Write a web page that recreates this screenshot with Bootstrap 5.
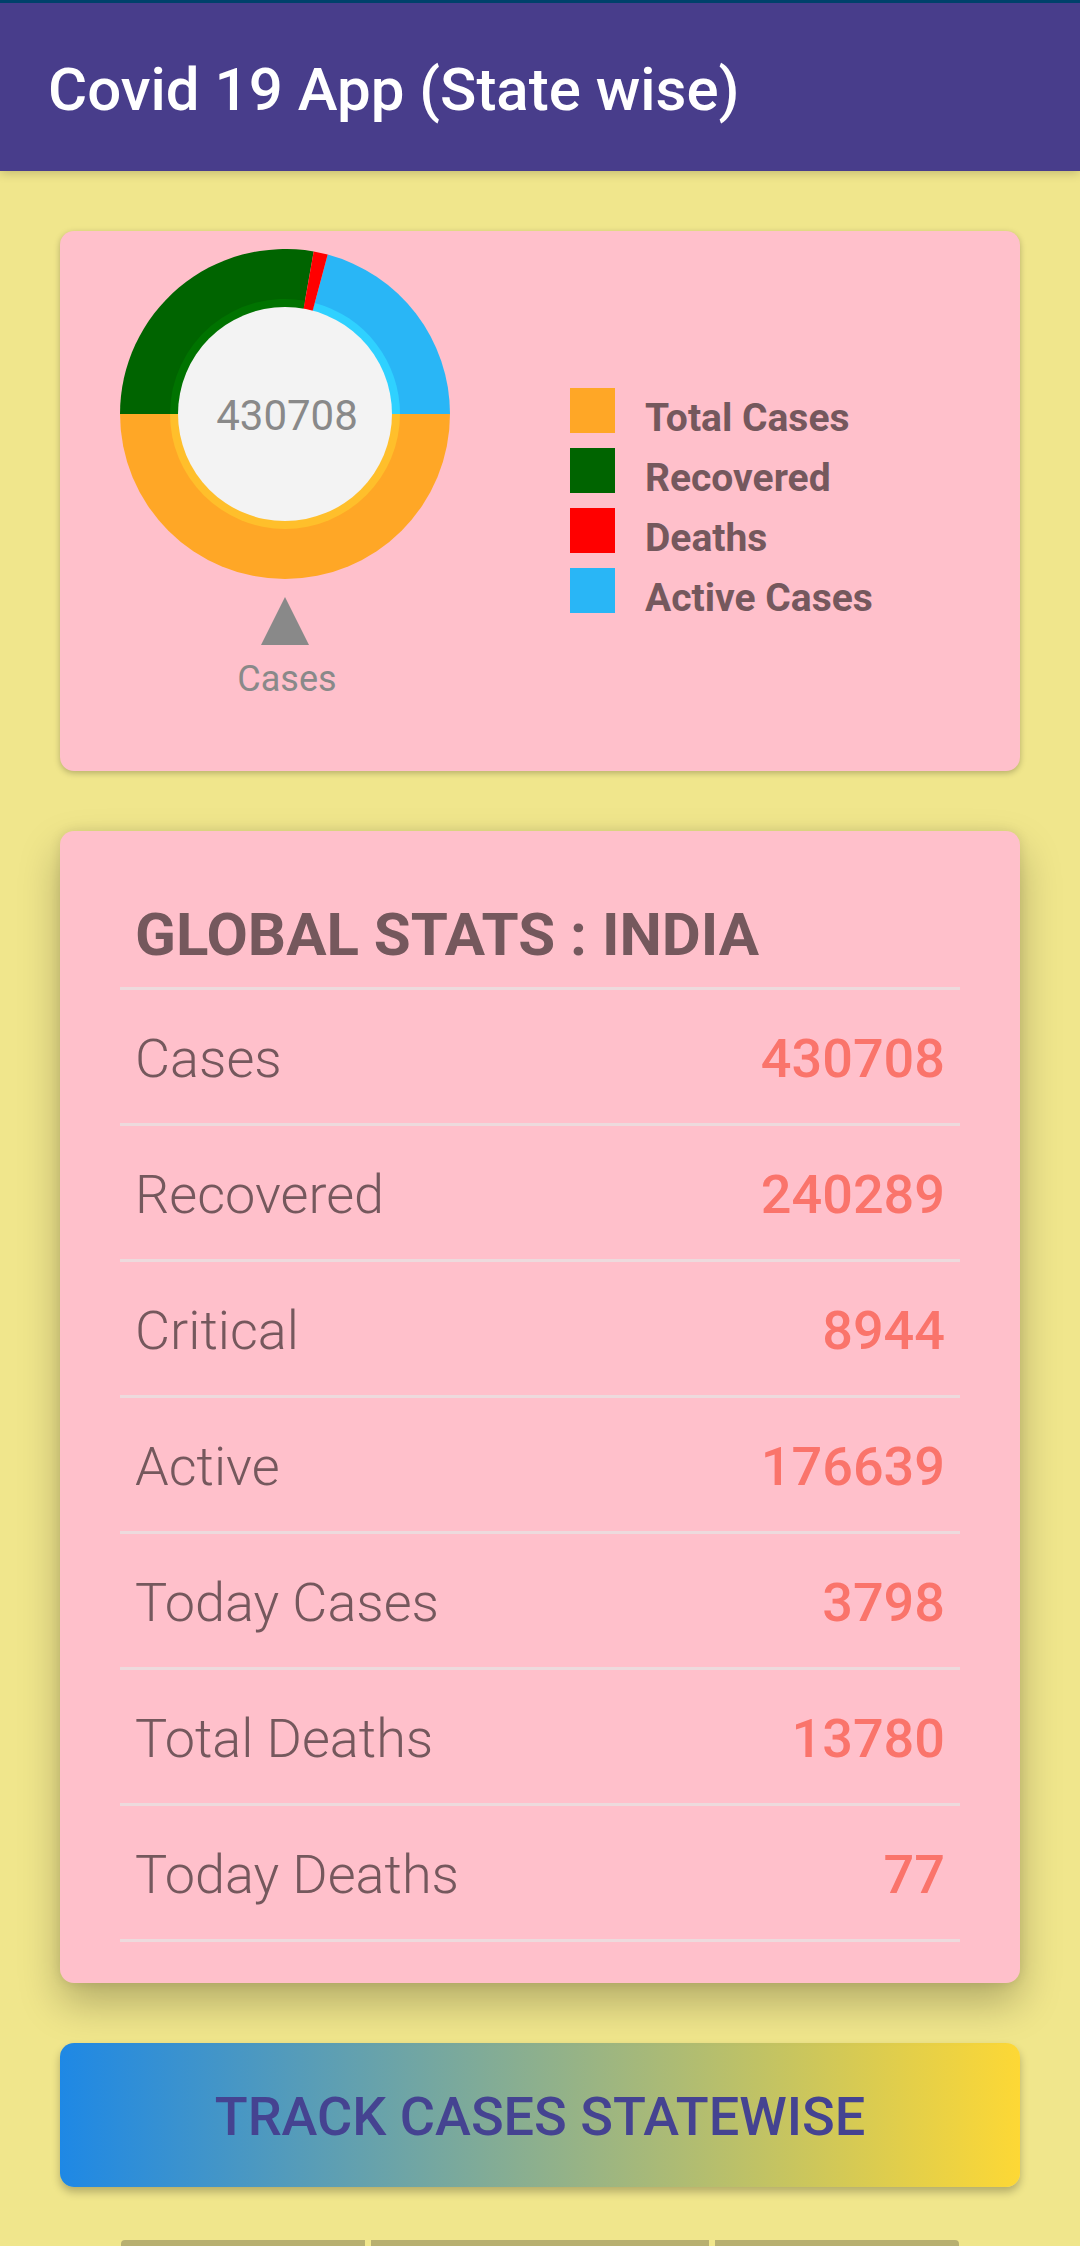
<!DOCTYPE html>
<html lang="en">
<head>
<meta charset="utf-8">
<meta name="viewport" content="width=device-width, initial-scale=1">
<title>Covid 19 App (State wise)</title>
<link rel="stylesheet" href="https://cdn.jsdelivr.net/npm/bootstrap@5.3.0/dist/css/bootstrap.min.css">
<style>
body{font-family:Roboto,"Liberation Sans",sans-serif;background:#f0e68c;color:#75585d}
.app-bar{background:#483d8b;border-top:3px solid #00416b;padding:5px 48px 0;height:171px;box-shadow:0 2px 10px rgba(0,0,0,.2)}
.app-title{font-size:60px;line-height:70px;font-weight:500;color:#fff}
.page-body{padding:60px 60px 0;gap:60px}
.panel{background:#ffc0cb;border:0;border-radius:14px}
.chart-panel{padding:18px 60px 65px;box-shadow:0 2px 6px rgba(0,0,0,.25)}
.chart-svg{width:330px;height:457px;flex:none}
.chart-svg text{fill:#898989;text-anchor:middle}
.chart-legend{padding:139px 0 0 120px}
.legend-row{height:60px;font-size:39px;line-height:46px;font-weight:700;gap:30px}
.legend-row span:last-child{padding-top:7px}
.swatch{width:45px;height:45px}
.stats-panel{padding:69px 60px 41px;box-shadow:0 20px 40px rgba(0,0,0,.25),0 0 12px rgba(0,0,0,.1)}
.stats-title{font-size:60px;line-height:70px;font-weight:700;padding:0 15px 17px;margin:0}
.stats-table{border-top:3px solid #eddadd;font-size:54px;line-height:63px;margin:0;--bs-table-bg:transparent;--bs-table-color:#75585d}
.stats-table th,.stats-table td{padding:37px 15px 33px;border-bottom:3px solid #eddadd}
.stats-table th{font-weight:300}
.stats-table td{font-weight:500;color:#fa746b}
.track-btn{height:144px;border:0;border-radius:14px;padding:8px 12px 6px;background:linear-gradient(90deg,#1e88e5,#fdd835);color:#454391;font-size:54px;line-height:63px;font-weight:500;box-shadow:0 5px 9px rgba(0,0,0,.25)}
.track-btn:hover{color:#454391}
.state-head{padding:0 61px;margin-top:-7px;gap:6px}
.state-head div{height:6px;background:#b8b070;flex:244 1 0}
.state-head div:first-child{border-top-left-radius:4px}
.state-head div:nth-child(2){flex-grow:338}
.state-head div:last-child{border-top-right-radius:4px}
</style>
<script src="https://cdn.jsdelivr.net/npm/bootstrap@5.3.0/dist/js/bootstrap.bundle.min.js"></script>
</head>
<body>
<header class="app-bar navbar">
  <h1 class="app-title m-0">Covid 19 App (State wise)</h1>
</header>
<main class="page-body d-flex flex-column">
  <section class="panel chart-panel card flex-row">
    <svg class="chart-svg" viewBox="0 0 330 457" role="img" aria-label="Cases chart">
      <path fill="#ffa726" d="M0 165A165 165 0 0 0 330 165Z"/>
      <path fill="#006400" d="M165 165L0 165A165 165 0 0 1 193.7 2.5Z"/>
      <path fill="#29b6f6" d="M165 165L207.7 5.6A165 165 0 0 1 330 165Z"/>
      <path fill="#ffbf2b" d="M50 165A115 115 0 0 0 280 165Z"/>
      <path fill="#007300" d="M165 165L50 165A115 115 0 0 1 185 51.7Z"/>
      <path fill="#2fd1ff" d="M165 165L194.8 53.9A115 115 0 0 1 280 165Z"/>
      <path fill="#f00" d="M165 165L193.7 2.5A165 165 0 0 1 207.7 5.6Z"/>
      <circle cx="165" cy="165" r="107" fill="#f3f3f3"/>
      <text x="167" y="181" font-size="42">430708</text>
      <path fill="#898989" d="M165 348L189 396H141Z"/>
      <text x="167" y="442" font-size="36">Cases</text>
    </svg>
    <ul class="chart-legend list-unstyled m-0">
      <li class="legend-row d-flex"><span class="swatch" style="background:#ffa726"></span><span>Total Cases</span></li>
      <li class="legend-row d-flex"><span class="swatch" style="background:#006400"></span><span>Recovered</span></li>
      <li class="legend-row d-flex"><span class="swatch" style="background:#f00"></span><span>Deaths</span></li>
      <li class="legend-row d-flex"><span class="swatch" style="background:#29b6f6"></span><span>Active Cases</span></li>
    </ul>
  </section>
  <section class="panel stats-panel card">
    <h2 class="stats-title">GLOBAL STATS : INDIA</h2>
    <table class="stats-table table">
      <tbody>
        <tr><th scope="row">Cases</th><td class="text-end">430708</td></tr>
        <tr><th scope="row">Recovered</th><td class="text-end">240289</td></tr>
        <tr><th scope="row">Critical</th><td class="text-end">8944</td></tr>
        <tr><th scope="row">Active</th><td class="text-end">176639</td></tr>
        <tr><th scope="row">Today Cases</th><td class="text-end">3798</td></tr>
        <tr><th scope="row">Total Deaths</th><td class="text-end">13780</td></tr>
        <tr><th scope="row">Today Deaths</th><td class="text-end">77</td></tr>
      </tbody>
    </table>
  </section>
  <button type="button" class="track-btn btn w-100">TRACK CASES STATEWISE</button>
  <div class="state-head d-flex"><div></div><div></div><div></div></div>
</main>
</body>
</html>
